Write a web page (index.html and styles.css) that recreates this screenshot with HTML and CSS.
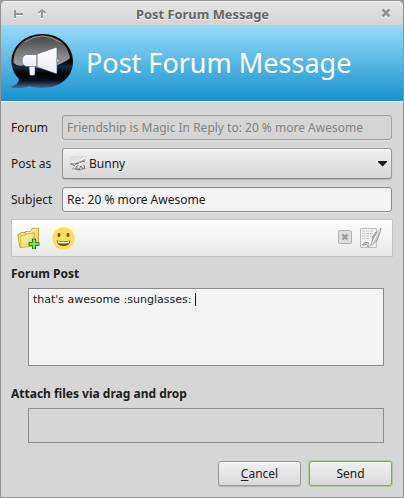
FILE: index.html
```html
<!DOCTYPE html>
<html lang="en">
<head>
<meta charset="utf-8">
<title>Post Forum Message</title>
<link rel="stylesheet" href="styles.css">
</head>
<body>
<div class="window">
  <header class="titlebar">
    <svg class="win-left" width="34" height="12" viewBox="0 0 34 12"><g fill="none" stroke="#fff" stroke-width="2" transform="translate(0 1)"><path d="M1 2v8M2 6h7M28 10V3M24 4.500h8"/></g><g fill="none" stroke="#969696" stroke-width="2"><path d="M1 2v8M2 6h7M28 10V2"/><path d="M24 4.500h1L28 2l3 2.500h1" stroke-width="1.600"/></g></svg>
    <h1 class="win-title">Post Forum Message</h1>
    <svg class="win-close" width="10" height="11" viewBox="0 0 10 11"><path d="M1.5 2.5l7 7m0-7l-7 7" stroke="#fff" stroke-width="2.6"/><path d="M1.5 1.5l7 7m0-7l-7 7" stroke="#929292" stroke-width="2.6"/></svg>
  </header>
  <div class="banner">
    <svg class="logo" width="64" height="56" viewBox="0 0 64 56">
      <defs>
        <linearGradient id="gloss" x1="0" y1="0" x2="0" y2="1"><stop offset="0" stop-color="#474747"/><stop offset=".35" stop-color="#686868"/><stop offset="1" stop-color="#aaa"/></linearGradient>
        <linearGradient id="deep" x1="0" y1="0" x2="0" y2="1"><stop offset=".5" stop-color="#000"/><stop offset=".6" stop-color="#152c40"/><stop offset=".74" stop-color="#000"/><stop offset=".86" stop-color="#08111e"/><stop offset="1" stop-color="#526f9f"/></linearGradient>
        <linearGradient id="horn" x1="0" y1="0" x2="0" y2="1"><stop offset="0" stop-color="#fff"/><stop offset="1" stop-color="#e8eaf0"/></linearGradient>
      </defs>
      <path d="M32.500 1C50 1 63 13 63 28.500C63 44 50 55 33 55C28 55 23 54.500 19 53C14 55.500 6 56 0 54C5 53 9 50 9 46C4 41 1.500 35 1.500 28.500C1.500 13 15 1 32.500 1Z" fill="url(#deep)"/>
      <path d="M32 2.500C47 2.500 58 11 60 25C56 29 49 31 43 34Q24 36 14 32Q8 34 3.500 30C3 14 16 2.500 32 2.500Z" fill="url(#gloss)"/>
      <path d="M15 9Q32-3 50 9" fill="none" stroke="#aaa" stroke-width=".8"/>
      <g fill="url(#horn)" stroke="#254263" stroke-width=".5"><path d="M19 32h6v9q0 1.500-1.500 1.500h-2.500Q19.500 42.500 19.500 41Z"/><path d="M16 21.500h11v12H16q-4-1-4-6T16 21.500Z"/><path d="M27 21L45.500 14.500h1.500v26h-1.500L27 34Z"/><path d="M47 25q2 0 2 2.500T47 30Z"/></g>
      <path d="M27 21.500v12" stroke="#8c9299" stroke-width=".8"/>
    </svg>
    <h2 class="banner-title">Post Forum Message</h2>
  </div>
  <main class="content">
    <div class="row"><label>Forum</label><div class="field disabled">Friendship is Magic In Reply to: 20 % more Awesome</div></div>
    <div class="row"><label>Post as</label><div class="select">
      <svg width="17" height="16" viewBox="0 0 17 16"><path d="M0 0h16v16H0z" fill="#dedede"/><path d="M0 8l3-1 4 1 4-3 4-1M2 13l5-1 3 2 5-2" fill="none" stroke="#aaa" stroke-width="1.500"/><path d="M1 8l4 2-2 2M5 8l3-1 1 2-3 2M5 13l4 1 2-4 2 3M10 7l3-2 2 1M14 9l1 4" fill="none" stroke="#555" stroke-width=".8"/><path d="M9 4l3 0 3-3M1 6l5 0M8 9l4-2M3 11h2" stroke="#fff" fill="none"/></svg>
      <span>Bunny</span><svg class="arrow" width="9" height="6" viewBox="0 0 9 6"><path d="M0 0h9v1L4.500 5.500 0 1z" fill="#1c1c1c"/></svg></div></div>
    <div class="row"><label>Subject</label><div class="field">Re: 20 % more Awesome</div></div>
    <div class="toolbar">
      <svg width="24" height="22" viewBox="0 0 24 22"><defs><linearGradient id="folder" x1="0" y1="0" x2="1" y2="1"><stop offset="0" stop-color="#fffbd0"/><stop offset="1" stop-color="#f0c83c"/></linearGradient></defs><path d="M8 4.500h5.500l1.500-3h6.500V17L11 19Z" fill="url(#folder)" stroke="#c89a2a" stroke-width=".8"/><path d="M.8 7.500L3 7l1-1.500h4L9 7l-5 13.500H3Z" fill="#f8df72" stroke="#c0901f" stroke-width=".8"/><path d="M3.500 9l4.500-.5L9.500 7l8-1L16 19 4 20.500Z" fill="url(#folder)" stroke="#d2a737" stroke-width=".8"/><path d="M15.500 12h3v3.500H22v3h-3.500V22h-3v-3.500H12v-3h3.500Z" fill="#7de857" stroke="#118222"/></svg>
      <svg class="smile" width="23" height="23" viewBox="0 0 23 23"><circle cx="11.500" cy="11.500" r="11.200" fill="#ffdc60"/><ellipse cx="7" cy="8" rx="1.500" ry="1.900" fill="#6b480f"/><ellipse cx="16" cy="8" rx="1.500" ry="1.900" fill="#6b480f"/><path d="M4.500 13.500Q11.500 15 18.500 13.500Q17.500 19 11.500 19T4.500 13.500Z" fill="#6b480f"/><path d="M5.500 14.200Q11.500 15.300 17.500 14.200L17 16Q11.500 17 6 16Z" fill="#fff"/></svg>
      <svg class="clear" width="14" height="14" viewBox="0 0 14 14"><rect x=".5" y=".5" width="13" height="13" rx="1.500" fill="#dedede" stroke="#b1b1b1"/><path d="M4.500 4.500l5 5m0-5l-5 5" stroke="#999" stroke-width="2.300"/></svg>
      <svg class="note" width="23" height="22" viewBox="0 0 23 22"><path d="M1.500 1.500h16v19h-16z" fill="#f1f1f1" stroke="#bcbcbc"/><path d="M3 4h11M3 6.500h11M3 9h10M3 11.500h8" stroke="#c8c8c8" stroke-dasharray="3 1"/><path d="M3 18q4-4 5-2t-3 2 1-2 3 2 4-1" fill="none" stroke="#999"/><path d="M21.500 1L14 11l-2 7 6-4 4-12Z" fill="#c9c9c9" stroke="#9d9d9d"/><path d="M21 2l-6 11-2 4" fill="none" stroke="#f8f8f8"/><path d="M17 5l-4 6" stroke="#888"/></svg>
    </div>
    <h3 class="post-heading">Forum Post</h3>
    <div class="editor">that's awesome :sunglasses: <i class="caret"></i></div>
    <h3 class="attach-heading">Attach files via drag and drop</h3>
    <div class="dropzone"></div>
    <div class="actions"><button><span><u>C</u>ancel</span></button><button class="primary">Send</button></div>
  </main>
</div>
</body>
</html>
```
FILE: styles.css
```css
* { box-sizing: border-box; }
html { background: #9c9c9c; }
body { margin: 0; font: 12px/17px "Noto Sans", sans-serif; color: #202020; }
h1, h2, h3 { margin: 0; }
svg { display: block; flex: none; }
.window { width: 404px; height: 498px; border: 1px solid #919191; border-radius: 6px 6px 0 0; background: #d6d6d6; overflow: hidden; }
.titlebar { height: 24px; display: flex; align-items: center; padding: 0 12px 0 13px; background: linear-gradient(#e6e6e6, #d3d3d3); box-shadow: inset 0 1px #f5f5f5; }
.win-left { margin-top: 1px; }
.win-title { flex: 1; padding-right: 24px; text-align: center; font-size: 12.9px; line-height: 18px; color: #666; text-shadow: 0 1px #f5f5f5; margin-top: 2px; }
.win-close { margin-left: auto; }
.banner { height: 77px; display: flex; align-items: flex-start; padding: 8px 0 0 10px; border-bottom: 1px solid #fff; background: linear-gradient(#98dbfa, #1692cf); }
.logo { margin-left: -1px; }
.banner-title { margin: 11px 0 0 12px; color: #fff; font-size: 27px; line-height: 38px; font-weight: 400; white-space: nowrap; }
.content { padding: 13px 10px 0; }
.row { display: flex; align-items: center; margin-bottom: 8px; }
.row label { width: 51px; flex: none; }
.field { width: 330px; height: 25px; padding: 3px 4px; border: 1px solid #8b8b8b; border-radius: 3px; background: #f3f3f3; box-shadow: 0 1px #e2e2e2, inset 0 1px #e7e7e7; }
.disabled { color: #838383; background: #d5d5d5; border-color: #a1a1a1; box-shadow: 0 1px #e2e2e2; }
.select { width: 330px; height: 31px; display: flex; align-items: center; gap: 2px; padding: 0 4px 0 7px; border: 1px solid #999; border-bottom-color: #858585; border-radius: 3px; background: linear-gradient(#f1f1f1, #d6d6d6); box-shadow: inset 0 1px #fafafa, 0 1px 1px #b9b9b9; }
.select .arrow { margin-left: auto; }
.toolbar { height: 38px; margin: -1px 0 0; display: flex; align-items: center; padding: 0 10px 0 5px; border: 1px solid #c4c4c4; background: linear-gradient(#fff, #e7e7e7); }
.smile { margin-left: 11px; }
.clear { margin-left: auto; margin-right: 7px; margin-top: -2px; }
.note { margin-top: -1px; }
h3 { font-size: 12px; line-height: 17px; }
.post-heading { margin-top: 8px; }
.editor { width: 356px; height: 78px; margin: 6px 0 0 17px; border: 1px solid #8a8a8a; background: #f3f3f3; padding: 4px; font: 11px/13px "DejaVu Sans", sans-serif; white-space: pre; }
.caret { display: inline-block; width: 1px; height: 13px; background: #111; vertical-align: top; }
.attach-heading { margin-top: 19px; }
.dropzone { width: 356px; height: 35px; margin: 6px 0 0 17px; border: 1px solid #8d8d8d; }
.actions { display: flex; justify-content: flex-end; gap: 8px; margin: 18px 1px 0 0; }
.actions button { width: 83px; height: 25px; padding: 0; border: 1px solid #959595; border-radius: 3px; background: linear-gradient(#f1f1f1, #d9d9d9); box-shadow: inset 0 1px #fafafa, 0 1px 1px #b0b0b0; font: inherit; color: inherit; }
.actions u { text-underline-offset: 2px; }
.actions .primary { border-color: #8a9b7d; box-shadow: inset 0 1px #fafafa, 0 0 0 1px #b2c9a0; }
```
